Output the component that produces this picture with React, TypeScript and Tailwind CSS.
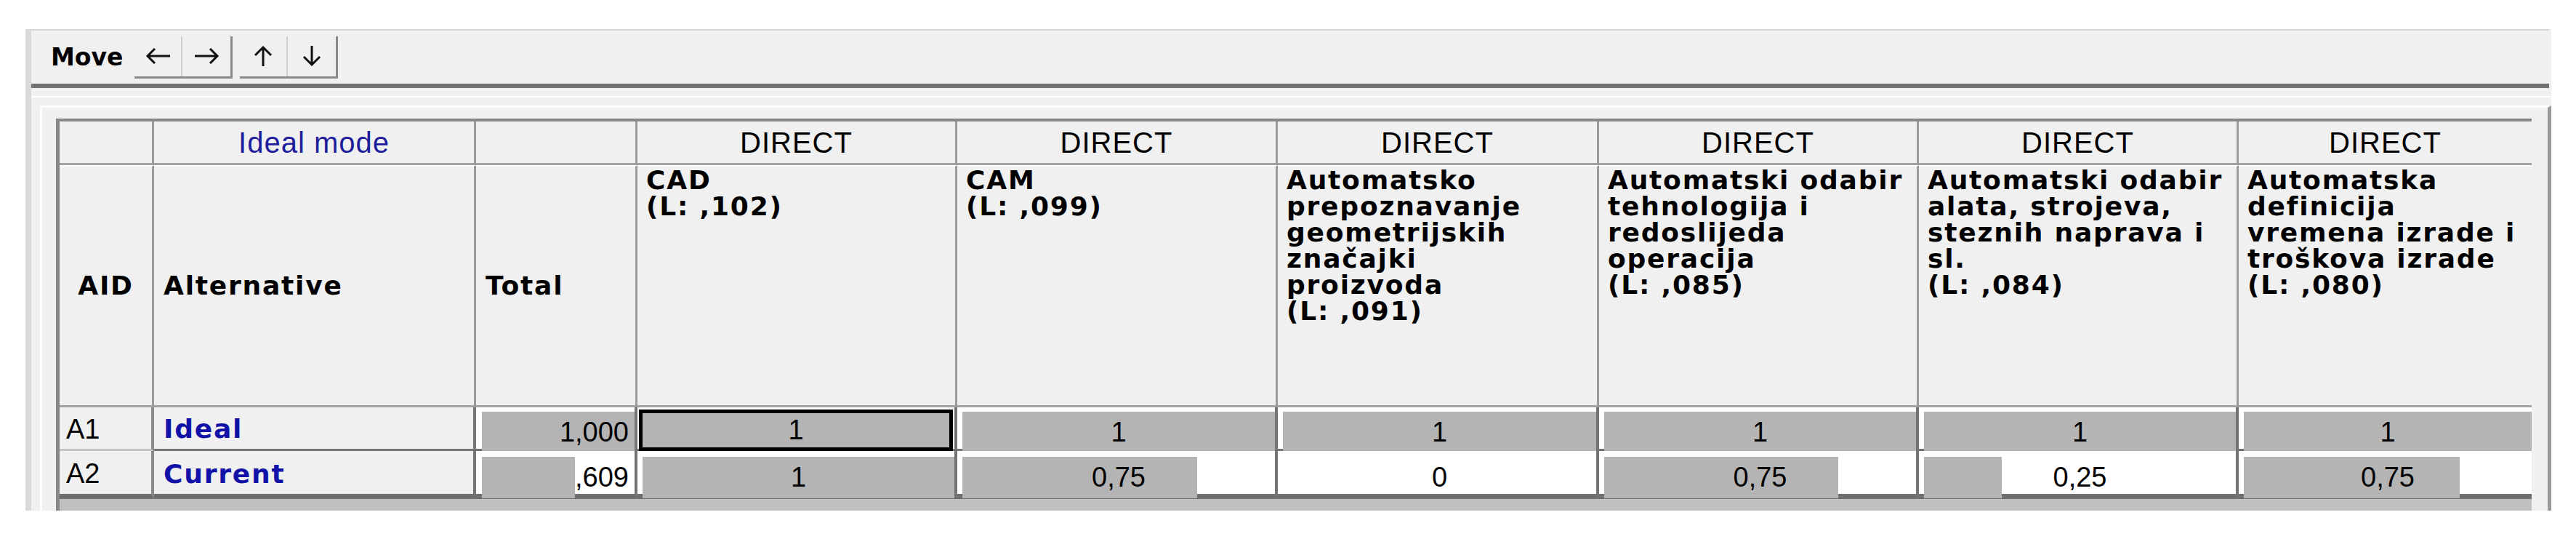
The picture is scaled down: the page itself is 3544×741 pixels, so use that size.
import React from 'react';

type Crit = {
  w: string;
  lines: string[];
  a2: number;
  v2: string;
  sel?: boolean;
  last?: boolean;
};

const criteria: Crit[] = [
  { w: 'w-[440px]', lines: ['CAD', '(L: ,102)'], a2: 1, v2: '1', sel: true },
  { w: 'w-[441px]', lines: ['CAM', '(L: ,099)'], a2: 0.75, v2: '0,75' },
  {
    w: 'w-[442px]',
    lines: ['Automatsko', 'prepoznavanje', 'geometrijskih', 'značajki', 'proizvoda', '(L: ,091)'],
    a2: 0,
    v2: '0',
  },
  {
    w: 'w-[440px]',
    lines: ['Automatski odabir', 'tehnologija i', 'redoslijeda', 'operacija', '(L: ,085)'],
    a2: 0.75,
    v2: '0,75',
  },
  {
    w: 'w-[440px]',
    lines: ['Automatski odabir', 'alata, strojeva,', 'steznih naprava i', 'sl.', '(L: ,084)'],
    a2: 0.25,
    v2: '0,25',
  },
  {
    w: 'w-[403px]',
    lines: ['Automatska', 'definicija', 'vremena izrade i', 'troškova izrade', '(L: ,080)'],
    a2: 0.75,
    v2: '0,75',
    last: true,
  },
];

// font stacks
const bold = "font-['DejaVu_Sans',sans-serif] font-bold text-[36px] tracking-[1.8px] leading-[36px] whitespace-nowrap";
const thin = "font-['Liberation_Sans',Arial,sans-serif] text-[38px] whitespace-nowrap";
const title = "font-['Liberation_Sans',Arial,sans-serif] text-[40px] tracking-[1px] whitespace-nowrap";

function Arrow({ dir }: { dir: 'left' | 'right' | 'up' | 'down' }) {
  const d = {
    left: 'M34 11H3M13 1L3 11L13 21',
    right: 'M1 11H32M22 1L32 11L22 21',
    up: 'M16 29V3M5 14L16 3L27 14',
    down: 'M16 1V27M5 16L16 27L27 16',
  }[dir];
  const horiz = dir === 'left' || dir === 'right';
  return (
    <svg width={horiz ? 35 : 32} height={horiz ? 22 : 30} viewBox={horiz ? '0 0 35 22' : '0 0 32 30'} fill="none">
      <path d={d} stroke="#111" strokeWidth={3} />
    </svg>
  );
}

function ToolButton({ dir, divider }: { dir: 'left' | 'right' | 'up' | 'down'; divider?: boolean }) {
  return (
    <div className={`w-[66px] h-full flex items-center justify-center ${divider ? 'border-r-2 border-[#cfcfcf]' : ''}`}>
      <Arrow dir={dir} />
    </div>
  );
}

export default function App() {
  return (
    <div className="w-[3544px] h-[741px] bg-white overflow-hidden">
      <div className="ml-[35px] mt-[40px] w-[3475px] h-[662px] bg-[#f0f0f0] border-l-[8px] border-[#dadada] flex flex-col">
        {/* Toolbar */}
        <div className="h-[81px] shrink-0 w-[3464px] border-t-2 border-t-[#d6d6d6] border-b-[6px] border-b-[#737373] flex items-center pl-[27px]">
          <span className="font-['DejaVu_Sans',sans-serif] font-bold text-[33px] text-black mr-[16px]">Move</span>
          <div className="flex h-[58px] border-r-[3px] border-b-[3px] border-[#8a8a8a] mr-[10px]">
            <ToolButton dir="left" divider />
            <ToolButton dir="right" />
          </div>
          <div className="flex h-[58px] border-r-[3px] border-b-[3px] border-[#8a8a8a]">
            <ToolButton dir="up" divider />
            <ToolButton dir="down" />
          </div>
        </div>

        <div className="h-[24px] shrink-0 flex flex-col justify-center">
          <div className="h-[2px] bg-white" />
        </div>

        {/* Grid panel */}
        <div className="flex-1 ml-[12px] border-t-[3px] border-l-[3px] border-white border-r-[5px] border-r-[#9a9a9a] pt-[15px] pl-[19px] overflow-hidden">
          <div className="w-[3406px] border-l-[5px] border-t-[4px] border-[#888888] flex flex-col">
            {/* Header row 1 */}
            <div className="flex h-[60px]">
              <div className="w-[130px] bg-[#f0f0f0] border-r-[3px] border-r-[#9a9a9a] border-b-[3px] border-b-[#a3a3a3]" />
              <div className="w-[443px] bg-[#f0f0f0] border-r-[3px] border-r-[#9a9a9a] border-b-[3px] border-b-[#a3a3a3] flex items-center justify-center">
                <span className={`${title} text-[#1e1e9c]`}>Ideal mode</span>
              </div>
              <div className="w-[222px] bg-[#f0f0f0] border-r-[3px] border-r-[#9a9a9a] border-b-[3px] border-b-[#a3a3a3]" />
              {criteria.map((c, i) => (
                <div
                  key={i}
                  className={`${c.w} bg-[#f0f0f0] border-b-[3px] border-b-[#a3a3a3] flex items-center justify-center ${c.last ? '' : 'border-r-[3px] border-r-[#9a9a9a]'}`}
                >
                  <span className={`${title} text-black`}>DIRECT</span>
                </div>
              ))}
            </div>

            {/* Header row 2 */}
            <div className="flex h-[333px]">
              <div className="w-[130px] bg-[#f0f0f0] border-t-2 border-t-white border-r-[3px] border-r-[#9a9a9a] border-b-[3px] border-b-[#a3a3a3] flex items-center justify-center">
                <span className={`${bold} text-black`}>AID</span>
              </div>
              <div className="w-[443px] bg-[#f0f0f0] border-t-2 border-t-white border-r-[3px] border-r-[#9a9a9a] border-b-[3px] border-b-[#a3a3a3] flex items-center pl-[13px]">
                <span className={`${bold} text-black`}>Alternative</span>
              </div>
              <div className="w-[222px] bg-[#f0f0f0] border-t-2 border-t-white border-r-[3px] border-r-[#9a9a9a] border-b-[3px] border-b-[#a3a3a3] flex items-center pl-[13px]">
                <span className={`${bold} text-black`}>Total</span>
              </div>
              {criteria.map((c, i) => (
                <div
                  key={i}
                  className={`${c.w} bg-[#f0f0f0] border-t-2 border-t-white border-b-[3px] border-b-[#a3a3a3] pt-[1px] pl-[12px] flex flex-col ${c.last ? '' : 'border-r-[3px] border-r-[#9a9a9a]'}`}
                >
                  {c.lines.map((l, j) => (
                    <span key={j} className={`${bold} text-black`}>
                      {l}
                    </span>
                  ))}
                </div>
              ))}
            </div>

            {/* Row A1 */}
            <div className="flex h-[60px]">
              <div className="w-[130px] bg-[#f0f0f0] border-r-[4px] border-r-[#8a8a8a] border-b-[3px] border-b-[#c4c4c4] flex items-center pl-[9px] pt-[3px]">
                <span className={`${thin} text-black`}>A1</span>
              </div>
              <div className="w-[443px] bg-[#f0f0f0] border-r-[4px] border-r-[#747474] border-b-[3px] border-b-[#747474] flex items-center pl-[13px] pt-[3px]">
                <span className={`${bold} text-[#1212a8]`}>Ideal</span>
              </div>
              <div className="w-[222px] bg-white border-r-[4px] border-r-[#747474] border-b-[3px] border-b-[#747474] pt-[6px] pl-[8px] grid">
                <div className="[grid-area:1/1] bg-[#b4b4b4] w-full" />
                <div className="[grid-area:1/1] flex items-center justify-end pr-[8px]">
                  <span className={`${thin} text-black`}>1,000</span>
                </div>
              </div>
              {criteria.map((c, i) => (
                <div
                  key={i}
                  className={`${c.w} bg-white border-b-[3px] border-b-[#747474] grid ${c.sel ? 'pt-[3px] pl-[2px] pr-[2px]' : 'pt-[6px] pl-[7px]'} ${c.last ? '' : 'border-r-[4px] border-r-[#747474]'}`}
                >
                  <div className={`[grid-area:1/1] bg-[#b4b4b4] w-full ${c.sel ? 'border-[5px] border-black' : ''}`} />
                  <div className="[grid-area:1/1] flex items-center justify-center">
                    <span className={`${thin} text-black`}>1</span>
                  </div>
                </div>
              ))}
            </div>

            {/* Row A2 */}
            <div className="flex h-[66px]">
              <div className="w-[130px] bg-[#f0f0f0] border-r-[4px] border-r-[#8a8a8a] border-b-[7px] border-b-[#6f6f6f] flex items-center pl-[9px] pt-[4px]">
                <span className={`${thin} text-black`}>A2</span>
              </div>
              <div className="w-[443px] bg-[#f0f0f0] border-r-[4px] border-r-[#747474] border-b-[7px] border-b-[#6f6f6f] flex items-center pl-[13px] pt-[4px]">
                <span className={`${bold} text-[#1212a8]`}>Current</span>
              </div>
              <div className="w-[222px] bg-white border-r-[4px] border-r-[#747474] border-b-[7px] border-b-[#6f6f6f] pt-[8px] pl-[8px] grid">
                <div className="[grid-area:1/1] bg-[#b4b4b4]" style={{ width: '60.9%' }} />
                <div className="[grid-area:1/1] flex items-center justify-end pr-[8px]">
                  <span className={`${thin} text-black`}>,609</span>
                </div>
              </div>
              {criteria.map((c, i) => (
                <div
                  key={i}
                  className={`${c.w} bg-white border-b-[7px] border-b-[#6f6f6f] pt-[8px] pl-[7px] grid ${c.last ? '' : 'border-r-[4px] border-r-[#747474]'}`}
                >
                  <div className="[grid-area:1/1] bg-[#b4b4b4]" style={{ width: `${c.a2 * 100}%` }} />
                  <div className="[grid-area:1/1] flex items-center justify-center">
                    <span className={`${thin} text-black`}>{c.v2}</span>
                  </div>
                </div>
              ))}
            </div>

            <div className="h-[16px] bg-[#c0c0c0]" />
          </div>
        </div>
      </div>
    </div>
  );
}
